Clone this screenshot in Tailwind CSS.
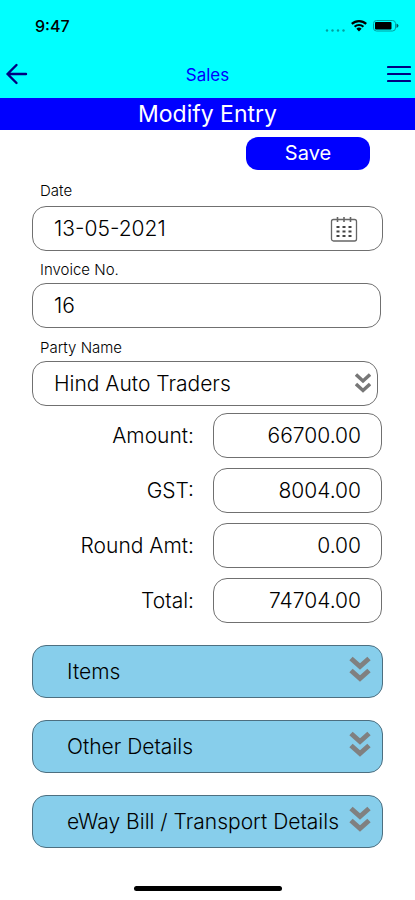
<!DOCTYPE html>
<html lang="en">
<head>
<meta charset="utf-8">
<meta name="viewport" content="width=device-width, initial-scale=1">
<title>Sales - Modify Entry</title>
<script src="https://cdn.jsdelivr.net/npm/@tailwindcss/browser@4"></script>
</head>
<body class="min-h-screen flex flex-col bg-white text-black font-light font-['Inter','Liberation_Sans',sans-serif]">
<header class="bg-[#00ffff]">
  <div class="h-[52px] pl-[35px] pr-4 flex items-center justify-between">
    <span class="text-[16px] leading-5 font-medium">9:47</span>
    <svg class="w-[74px] h-4" viewBox="0 0 74 16" aria-hidden="true">
      <g fill="#00a0a0"><circle cx="2" cy="12.500" r="1.200"/><circle cx="7.500" cy="12.500" r="1.200"/><circle cx="13" cy="12.500" r="1.200"/><circle cx="18.500" cy="12.500" r="1.200"/></g>
      <g fill="none" stroke="#000" stroke-width="2.200"><path d="M26.800 5.900a10.500 10.500 0 0 1 14.400 0"/><path d="M29.600 8.700a6.500 6.500 0 0 1 8.800 0"/></g>
      <path d="M34 13.500l-2.600-2.700a3.700 3.700 0 0 1 5.200 0z"/>
      <rect x="48.500" y="2.500" width="22" height="10.500" rx="3" fill="none" stroke="#00a0a0"/>
      <rect x="50" y="4" width="16.500" height="7.500" rx="1"/>
      <path d="M71.500 5.500q4 2.200 0 4.500z" fill="#006060"/>
    </svg>
  </div>
  <div class="h-[46px] px-1 grid grid-cols-[1fr_auto_1fr] items-center">
    <button type="button" aria-label="Back" class="justify-self-start">
      <svg class="block w-6 h-6" viewBox="0 0 24 24" fill="none" stroke="#000080" stroke-width="2.400" stroke-linecap="round" stroke-linejoin="round"><path d="M22 11H3.500M12.500 2l-9 9 9 9"/></svg>
    </button>
    <h1 class="text-[17px] leading-6 font-normal text-[#0000ff]">Sales</h1>
    <button type="button" aria-label="Menu" class="justify-self-end">
      <svg class="block w-6 h-6" viewBox="0 0 24 24" fill="none" stroke="#000080" stroke-width="2.200" stroke-linecap="round"><path d="M1 4h22M1 11h22M1 18h22"/></svg>
    </button>
  </div>
</header>
<h2 class="h-8 bg-[#0000ff] text-white text-center text-[23px] leading-8 font-normal">Modify Entry</h2>
<form class="pl-8 pr-8 flex flex-col">
  <button type="button" class="mt-[7px] mr-[13px] self-end w-[124px] h-[33px] rounded-xl bg-[#0000ff] text-white text-[20px] leading-[33px] font-normal">Save</button>

  <label for="date" class="mt-[11px] pl-2 text-[15px] leading-5">Date</label>
  <div class="mt-[5px] relative">
    <input id="date" type="text" value="13-05-2021" class="w-full h-[45px] pl-[21px] pr-14 rounded-[14px] border border-[#707070] text-[21px]">
    <button type="button" aria-label="Choose date" class="absolute right-[25px] top-[9px]">
      <svg class="block w-7 h-7" viewBox="0 0 28 28" fill="none" stroke="#666"><rect x="1.500" y="4.500" width="25" height="21.500" rx="2" stroke-width="1.300"/><path d="M7.500 2v5M14 2v5M20.500 2v5" stroke-width="1.600"/><path d="M6.500 12h3m3 0h3m3 0h3M6.500 16.500h3m3 0h3m3 0h3M6.500 21h3m3 0h3m3 0h3" stroke="#444" stroke-width="2.200"/></svg>
    </button>
  </div>

  <label for="invoice" class="mt-[9px] pl-2 text-[15px] leading-5">Invoice No.</label>
  <input id="invoice" type="text" value="16" class="mt-[3px] mr-[2px] h-[45px] px-[21px] rounded-[14px] border border-[#707070] text-[21px]">

  <label for="party" class="mt-[10px] pl-2 text-[15px] leading-5">Party Name</label>
  <div class="mt-[3px] mr-[5px] relative">
    <select id="party" class="appearance-none w-full h-[45px] pl-[21px] pr-9 rounded-[14px] border border-[#707070] text-[21px]"><option>Hind Auto Traders</option></select>
    <svg class="absolute right-[7px] top-3 w-4 h-5 pointer-events-none" viewBox="0 0 16 20" fill="none" stroke="#777" stroke-width="3.400"><path d="M1 1.500l7 6.500 7-6.500M1 11l7 6.500 7-6.500"/></svg>
  </div>

  <div class="mt-[7px] mr-[1px] grid grid-cols-[1fr_169px] gap-x-[19px] gap-y-[10px] items-center text-right text-[21px]">
    <label for="amount">Amount:</label>
    <input id="amount" type="text" value="66700.00" class="w-full h-[45px] px-5 rounded-[14px] border border-[#707070] text-right">
    <label for="gst">GST:</label>
    <input id="gst" type="text" value="8004.00" class="w-full h-[45px] px-5 rounded-[14px] border border-[#707070] text-right">
    <label for="round">Round Amt:</label>
    <input id="round" type="text" value="0.00" class="w-full h-[45px] px-5 rounded-[14px] border border-[#707070] text-right">
    <label for="total">Total:</label>
    <input id="total" type="text" value="74704.00" class="w-full h-[45px] px-5 rounded-[14px] border border-[#707070] text-right">
  </div>

  <div class="mt-[22px] flex flex-col gap-[22px] text-[21px]">
    <button type="button" class="h-[53px] pl-[34px] pr-[11px] flex items-center justify-between rounded-[14px] border border-[#4d6f80] bg-[#87ceeb]">
      <span>Items</span>
      <svg class="w-[22px] h-[26px] mb-[6px]" viewBox="0 0 22 26" fill="none" stroke="#808080" stroke-width="5"><path d="M2 2.500l9 8 9-8M2 14.500l9 8 9-8"/></svg>
    </button>
    <button type="button" class="h-[53px] pl-[34px] pr-[11px] flex items-center justify-between rounded-[14px] border border-[#4d6f80] bg-[#87ceeb]">
      <span>Other Details</span>
      <svg class="w-[22px] h-[26px] mb-[6px]" viewBox="0 0 22 26" fill="none" stroke="#808080" stroke-width="5"><path d="M2 2.500l9 8 9-8M2 14.500l9 8 9-8"/></svg>
    </button>
    <button type="button" class="h-[53px] pl-[34px] pr-[11px] flex items-center justify-between rounded-[14px] border border-[#4d6f80] bg-[#87ceeb]">
      <span class="whitespace-nowrap">eWay Bill / Transport Details</span>
      <svg class="w-[22px] h-[26px] mb-[6px]" viewBox="0 0 22 26" fill="none" stroke="#808080" stroke-width="5"><path d="M2 2.500l9 8 9-8M2 14.500l9 8 9-8"/></svg>
    </button>
  </div>
</form>
<div class="mt-auto mb-[9px] self-center w-[148px] h-[5px] rounded-full bg-black"></div>
</body>
</html>
